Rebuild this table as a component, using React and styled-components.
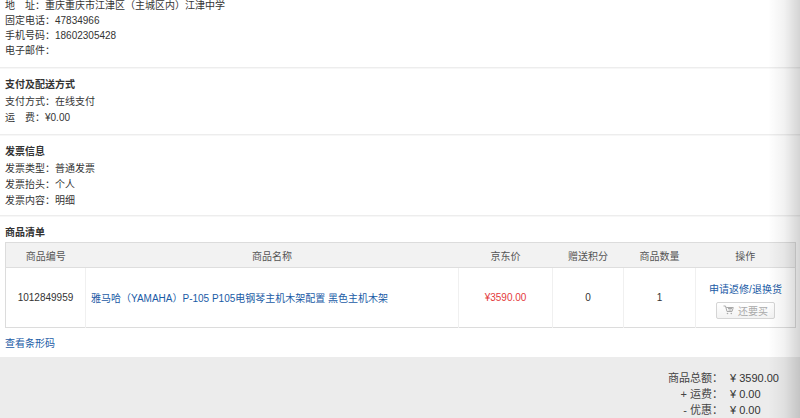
import styled, { createGlobalStyle } from 'styled-components';

const GlobalStyle = createGlobalStyle`
	html, body {
		margin: 0;
		padding: 0;
		background: #fff;
	}
	body {
		font-family: 'Liberation Sans', 'Noto Sans CJK SC', sans-serif;
		font-size: 10px;
		color: #333;
		overflow: hidden;
	}
`;

const Page = styled.div`
	position: relative;
	width: 800px;
	height: 418px;
	overflow: hidden;
	background: #fff;
`;

const Section = styled.div`
	padding: ${(p) => p.$pad || '7px 5px 8px'};
	border-bottom: 1px solid #ededed;
	box-shadow: 0 1px 0 #f7f7f7;
`;

const Title = styled.div`
	font-weight: bold;
	line-height: 16px;
	margin-bottom: 1px;
`;

const Line = styled.div`
	line-height: ${(p) => p.$lh || 16}px;
	white-space: nowrap;
`;

const Spaced = styled.span`
	display: inline-block;
	width: ${(p) => p.$w}px;
`;

const ListSection = styled.div`
	padding: 9px 5px 5px;
`;

const Table = styled.table`
	width: 790px;
	margin-top: 1px;
	border-collapse: collapse;
	table-layout: fixed;
	border: 1px solid #dcdcdc;
`;

const HeadCell = styled.th`
	height: 24px;
	padding: 0;
	background: #f2f2f2;
	border-bottom: 1px solid #dedede;
	font-weight: normal;
	color: #555;
	text-align: center;
`;

const Cell = styled.td`
	height: 59px;
	padding: 0 ${(p) => (p.$left ? '5px' : '0')};
	text-align: ${(p) => (p.$left ? 'left' : 'center')};
	border-left: ${(p) => (p.$first ? 'none' : '1px solid #f0f0f0')};
	color: ${(p) => p.$color || '#333'};
	font-size: ${(p) => p.$size || 10}px;
`;

const Link = styled.a`
	color: #1a5ba6;
	text-decoration: none;
	white-space: nowrap;
`;

const OpLink = styled(Link)`
	display: block;
	line-height: 14px;
	margin-top: 6px;
`;

const BuyButton = styled.span`
	display: inline-flex;
	align-items: center;
	gap: 4px;
	height: 15px;
	width: 57px;
	justify-content: center;
	margin-top: 5px;
	border: 1px solid #d5d5d5;
	border-radius: 2px;
	background: linear-gradient(#fff, #f3f3f3);
	color: #aaa;
	font-size: 10px;
`;

const BarcodeLine = styled.div`
	margin-top: 8px;
	line-height: 16px;
`;

const Footer = styled.div`
	background: #ececec;
	height: 61px;
	padding: 13px 17px 0 0;
	box-sizing: border-box;
	display: grid;
	grid-template-columns: auto 53px;
	justify-content: end;
	align-content: start;
	column-gap: 7px;
	font-size: 11px;
	line-height: 16px;
`;

const Label = styled.span`
	text-align: right;
	color: #444;
`;

const Value = styled.span`
	color: #333;
	white-space: pre;
`;

const EdgeShade = styled.div`
	position: absolute;
	top: 0;
	right: 0;
	width: 32px;
	height: 100%;
	pointer-events: none;
	background: linear-gradient(to right, rgba(0, 0, 0, 0), rgba(0, 0, 0, 0.05) 50%, rgba(0, 0, 0, 0.17));
`;

function CartIcon() {
	return (
		<svg width="11" height="10" viewBox="0 0 11 10" fill="none" stroke="#aaa" strokeWidth="1">
			<path d="M0.5 1h2l1.5 5.5h5l1.3-4H3.2" />
			<path d="M5 3.5h4M5.5 5h3" />
			<circle cx="4.5" cy="8.5" r="0.8" fill="#aaa" stroke="none" />
			<circle cx="8.3" cy="8.5" r="0.8" fill="#aaa" stroke="none" />
		</svg>
	);
}

const columns = [80, 373, 94, 71, 72, 100];

export default function App() {
	return (
		<Page>
			<GlobalStyle />
			<Section $pad="0 5px 9px">
				<div style={{ marginTop: '-2px' }}>
					<Line $lh={15}>
						<Spaced $w={20}>地</Spaced>址：重庆重庆市江津区（主城区内）江津中学
					</Line>
					<Line $lh={15}>固定电话：47834966</Line>
					<Line $lh={15}>手机号码：18602305428</Line>
					<Line $lh={15}>电子邮件：</Line>
				</div>
			</Section>
			<Section $pad="9px 5px 8px">
				<Title>支付及配送方式</Title>
				<Line>支付方式：在线支付</Line>
				<Line>
					<Spaced $w={20}>运</Spaced>费：¥0.00
				</Line>
			</Section>
			<Section $pad="9px 5px 6px">
				<Title>发票信息</Title>
				<Line>发票类型：普通发票</Line>
				<Line>发票抬头：个人</Line>
				<Line>发票内容：明细</Line>
			</Section>
			<ListSection>
				<Title>商品清单</Title>
				<Table>
					<colgroup>
						{columns.map((w, i) => (
							<col key={i} style={{ width: w }} />
						))}
					</colgroup>
					<thead>
						<tr>
							<HeadCell>商品编号</HeadCell>
							<HeadCell>商品名称</HeadCell>
							<HeadCell>京东价</HeadCell>
							<HeadCell>赠送积分</HeadCell>
							<HeadCell>商品数量</HeadCell>
							<HeadCell>操作</HeadCell>
						</tr>
					</thead>
					<tbody>
						<tr>
							<Cell $first>1012849959</Cell>
							<Cell $left>
								<Link href="#">雅马哈（YAMAHA）P-105 P105电钢琴主机木架配置 黑色主机木架</Link>
							</Cell>
							<Cell $color="#e4393c">¥3590.00</Cell>
							<Cell>0</Cell>
							<Cell>1</Cell>
							<Cell>
								<OpLink href="#">申请返修/退换货</OpLink>
								<BuyButton>
									<CartIcon />
									还要买
								</BuyButton>
							</Cell>
						</tr>
					</tbody>
				</Table>
				<BarcodeLine>
					<Link href="#">查看条形码</Link>
				</BarcodeLine>
			</ListSection>
			<Footer>
				<Label>商品总额：</Label>
				<Value>¥ 3590.00</Value>
				<Label>+ 运费：</Label>
				<Value>¥ 0.00</Value>
				<Label>- 优惠：</Label>
				<Value>¥ 0.00</Value>
			</Footer>
			<EdgeShade />
		</Page>
	);
}
